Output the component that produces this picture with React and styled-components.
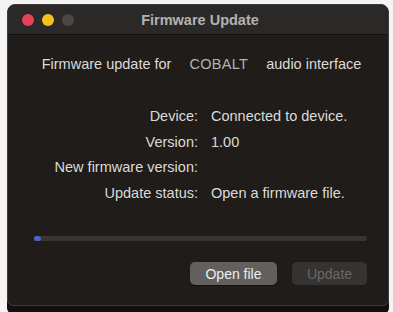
import styled, { createGlobalStyle } from "styled-components"

const Global = createGlobalStyle`
    body{
        margin:0;
        background:#f4f4f4;
        font-family:"Liberation Sans", Arial, sans-serif;
    }
`

const Page = styled.div`
    width:393px;
    height:312px;
    padding:4px 4px 0 7px;
    box-sizing:border-box;
    overflow:hidden;
`

const Window = styled.div`
    height:300px;
    background:#1f1c1a;
    border:1px solid #3e3b38;
    border-radius:8px 8px 6px 6px;
    display:flex;
    flex-direction:column;
    box-shadow: 0 8px 0 0 #121110;
`

const TitleBar = styled.div`
    height:29px;
    background:#2b2927;
    border-bottom:1px solid #141210;
    border-radius:8px 8px 0 0;
    display:flex;
    align-items:center;
    padding-left:14px;
    gap:8px;
`

const Light = styled.span`
    width:12px;
    height:12px;
    border-radius:50%;
    background:${p => p.color};
`

const Title = styled.span`
    flex:1;
    text-align:center;
    margin-right:70px;
    font-size:14.5px;
    font-weight:bold;
    color:#b4b2b0;
`

const Body = styled.div`
    flex:1;
    display:flex;
    flex-direction:column;
    padding:0 21px 0 25px;
`

const Headline = styled.div`
    display:flex;
    justify-content:center;
    gap:18px;
    margin-top:21px;
    font-size:14.5px;
    color:#dcdad8;
    padding-left:3px;
`

const Model = styled.span`
    color:#b5b3b1;
    letter-spacing:0.3px;
`

const InfoGrid = styled.div`
    display:grid;
    grid-template-columns:165px auto;
    column-gap:13px;
    row-gap:9px;
    margin-top:36px;
    font-size:14.5px;
    color:#dcdad8;
    line-height:16.5px;
`

const Label = styled.span`
    text-align:right;
    white-space:nowrap;
`

const Progress = styled.div`
    margin-top:35px;
    height:5px;
    margin-left:1px;
    border-radius:3px;
    background:#373432;
`

const Fill = styled.div`
    height:100%;
    border-radius:3px;
    background:#4a64c8;
`

const Buttons = styled.div`
    display:flex;
    justify-content:flex-end;
    gap:15px;
    margin-top:21px;
`

const Button = styled.button`
    width:${p => p.w}px;
    height:23px;
    border:none;
    border-radius:5px;
    font-family:"Liberation Sans", Arial, sans-serif;
    font-size:14px;
    background:${p => p.disabled ? "#363432" : "#62605e"};
    color:${p => p.disabled ? "#6a6866" : "#eeeceb"};
    box-shadow:${p => p.disabled ? "none" : "0 1px 0 rgba(0,0,0,0.5)"};
`

const rows = [
    ["Device:", "Connected to device."],
    ["Version:", "1.00"],
    ["New firmware version:", ""],
    ["Update status:", "Open a firmware file."],
]

export default function App() {
    const progress = 2
    return (
        <>
            <Global />
            <Page>
                <Window>
                    <TitleBar>
                        <Light color="#e5425a" />
                        <Light color="#f4c21f" />
                        <Light color="#4a4846" />
                        <Title>Firmware Update</Title>
                    </TitleBar>
                    <Body>
                        <Headline>
                            <span>Firmware update for</span>
                            <Model>COBALT</Model>
                            <span>audio interface</span>
                        </Headline>
                        <InfoGrid>
                            {rows.flatMap(([k, v]) => [
                                <Label key={k}>{k}</Label>,
                                <span key={k + "v"}>{v}</span>,
                            ])}
                        </InfoGrid>
                        <Progress>
                            <Fill style={{ width: `${progress}%` }} />
                        </Progress>
                        <Buttons>
                            <Button w={87}>Open file</Button>
                            <Button w={75} disabled>Update</Button>
                        </Buttons>
                    </Body>
                </Window>
            </Page>
        </>
    )
}
